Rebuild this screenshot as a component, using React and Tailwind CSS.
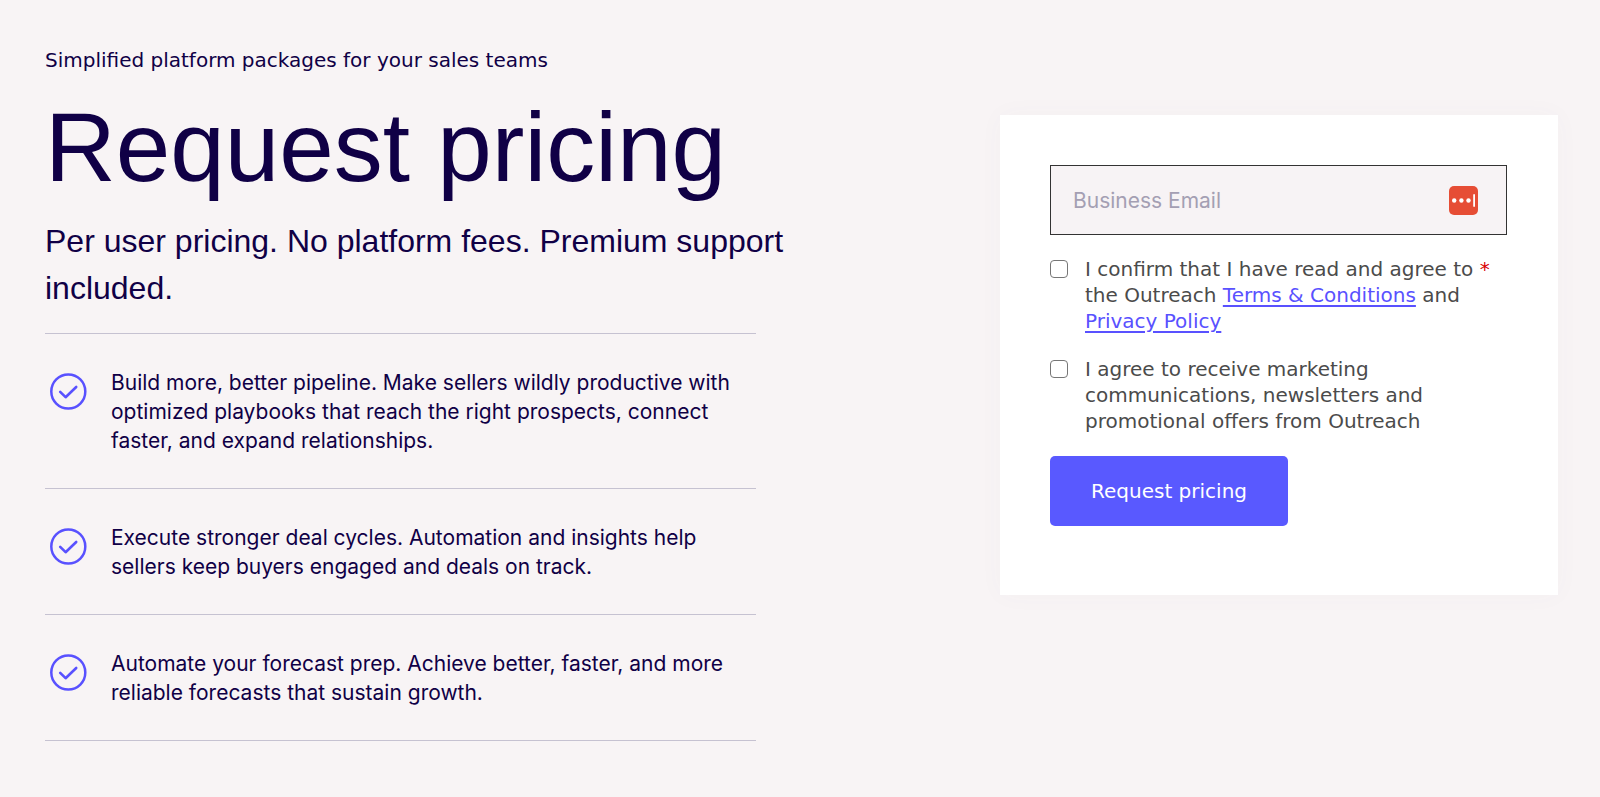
import React, { useState } from 'react';

const benefits = [
  'Build more, better pipeline. Make sellers wildly productive with optimized playbooks that reach the right prospects, connect faster, and expand relationships.',
  'Execute stronger deal cycles. Automation and insights help sellers keep buyers engaged and deals on track.',
  'Automate your forecast prep. Achieve better, faster, and more reliable forecasts that sustain growth.'
];

const CheckIcon = () => (
  <svg className="w-[38px] h-[38px] mt-1 shrink-0" viewBox="0 0 38 38" fill="none" stroke="#5951ff" aria-hidden="true">
    <circle cx="19.3" cy="19.5" r="17" strokeWidth="2.5" />
    <path d="M11.2 19.8l5.4 5.4L27.2 15" strokeWidth="2.6" strokeLinecap="round" strokeLinejoin="round" />
  </svg>
);

const PasswordManagerIcon = () => (
  <svg className="w-[29px] h-[29px]" viewBox="0 0 29 29" aria-hidden="true">
    <rect width="29" height="29" rx="5" fill="#e64d35" />
    <circle cx="5.2" cy="14.5" r="2.2" fill="#fff" />
    <circle cx="12.4" cy="14.5" r="2.2" fill="#fff" />
    <circle cx="19.5" cy="14.5" r="2.2" fill="#fff" />
    <rect x="24.2" y="8" width="1.8" height="13" rx="0.9" fill="#fff" />
  </svg>
);

const Consent = ({ id, checked, onChange, required, children }) => (
  <div className="flex items-start">
    <input
      id={id}
      type="checkbox"
      checked={checked}
      onChange={onChange}
      required={required}
      className="appearance-none w-[18px] h-[18px] mt-1 mr-[17px] shrink-0 rounded-[4px] border border-[#767676] bg-white checked:bg-[#5951ff]"
    />
    <label htmlFor={id} className="flex-1 font-['DejaVu_Sans',sans-serif] text-[20px] leading-[26px] text-[#4b4b4b]">
      {children}
    </label>
  </div>
);

const PricingForm = () => {
  const [email, setEmail] = useState('');
  const [terms, setTerms] = useState(false);
  const [marketing, setMarketing] = useState(false);

  const handleSubmit = (e) => {
    e.preventDefault();
  };

  return (
    <form
      onSubmit={handleSubmit}
      className="w-full max-w-[558px] mt-[70px] bg-white pl-[50px] pr-[51px] pt-[50px] pb-[69px] shadow-[0_0_24px_rgba(90,80,140,0.03)]"
    >
      <div className="flex items-center h-[70px] pl-[22px] pr-7 border border-[#333] bg-[#f7f3f5]">
        <input
          type="email"
          aria-label="Business Email"
          placeholder="Business Email"
          value={email}
          onChange={(e) => setEmail(e.target.value)}
          className="flex-1 min-w-0 h-full bg-transparent outline-none font-['Inter',sans-serif] text-[21px] text-[#100046] placeholder:text-[#a49fb3]"
        />
        <PasswordManagerIcon />
      </div>

      <div className="flex flex-col gap-[22px] mt-[21px]">
        <Consent id="terms" checked={terms} onChange={() => setTerms(!terms)} required>
          I confirm that I have read and agree to <span className="text-[#d90000]">*</span>
          <br />
          the Outreach{' '}
          <a href="#terms" className="text-[#5951ff] underline underline-offset-3">Terms &amp; Conditions</a> and
          <br />
          <a href="#privacy" className="text-[#5951ff] underline underline-offset-3">Privacy Policy</a>
        </Consent>
        <Consent id="marketing" checked={marketing} onChange={() => setMarketing(!marketing)}>
          I agree to receive marketing
          <br />
          communications, newsletters and
          <br />
          promotional offers from Outreach
        </Consent>
      </div>

      <button
        type="submit"
        className="w-[238px] h-[70px] mt-[22px] rounded-[5px] bg-[#5959ff] font-['DejaVu_Sans',sans-serif] text-[20px] text-white"
      >
        Request pricing
      </button>
    </form>
  );
};

const App = () => {
  return (
    <main className="min-h-screen flex items-start justify-between gap-10 bg-[#f8f4f5] pl-[45px] pr-[42px] pt-[45px] pb-[54px] font-['Liberation_Sans',Arial,sans-serif] text-[#100046]">
      <section className="flex-1 max-w-[780px]">
        <p className="font-['DejaVu_Sans',sans-serif] text-[20px] leading-[30px]">
          Simplified platform packages for your sales teams
        </p>
        <h1 className="mt-5 text-[98px] leading-[104px] font-normal">Request pricing</h1>
        <p className="mt-[19px] text-[32px] leading-[47px]">
          Per user pricing. No platform fees. Premium support included.
        </p>

        <ul className="max-w-[711px] mt-[21px] border-t border-[#c6c2d1]">
          {benefits.map((text) => (
            <li key={text} className="flex items-start pl-1 pt-[34px] pb-[33px] border-b border-[#c6c2d1]">
              <CheckIcon />
              <p className="ml-6 font-['Inter',sans-serif] text-[21px] leading-[29px]">{text}</p>
            </li>
          ))}
        </ul>
      </section>

      <PricingForm />
    </main>
  );
};

export default App;
